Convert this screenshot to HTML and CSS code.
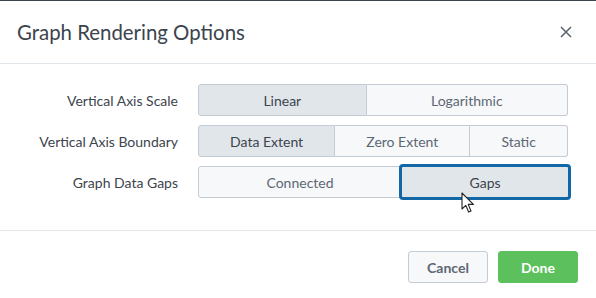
FILE: index.html
```html
<!DOCTYPE html>
<html lang="en">
<head>
    <meta charset="UTF-8">
    <title>Graph Rendering Options</title>
    <link rel="stylesheet" href="styles.css">
</head>
<body>
    <div class="modal">
        <!-- Header -->
        <div class="modal-header">
            <h1>Graph Rendering Options</h1>
            <button class="close" aria-label="Close">
                <svg width="12" height="12" viewBox="0 0 12 12"><path d="M1 1L11 11M11 1L1 11" stroke="#5c6773" stroke-width="1.6" fill="none"/></svg>
            </button>
        </div>

        <!-- Options -->
        <div class="modal-body">
            <div class="field">
                <label>Vertical Axis Scale</label>
                <div class="segmented">
                    <button class="seg selected">Linear</button>
                    <button class="seg">Logarithmic</button>
                </div>
            </div>
            <div class="field">
                <label>Vertical Axis Boundary</label>
                <div class="segmented">
                    <button class="seg selected">Data Extent</button>
                    <button class="seg">Zero Extent</button>
                    <button class="seg">Static</button>
                </div>
            </div>
            <div class="field">
                <label>Graph Data Gaps</label>
                <div class="segmented">
                    <button class="seg">Connected</button>
                    <button class="seg selected focused">Gaps
                        <svg class="cursor" width="14" height="22" viewBox="0 0 14 22"><path d="M1 1L1 17L4.8 13.4L7.6 20L10 19L7.2 12.4L12.4 12.4Z" fill="#fff" stroke="#222" stroke-width="1.1" stroke-linejoin="round"/></svg>
                    </button>
                </div>
            </div>
        </div>

        <!-- Footer -->
        <div class="modal-footer">
            <button class="btn cancel">Cancel</button>
            <button class="btn done">Done</button>
        </div>
    </div>
</body>
</html>
```

FILE: styles.css
```css
/* General styles */
body {
    margin: 0;
    background: #fff;
    font-family: Lato, "Open Sans", sans-serif;
    color: #3c444d;
}
.modal {
    width: 596px;
    height: 298px;
    border-top: 1px solid #3c444d;
    box-sizing: border-box;
}

/* Header */
.modal-header {
    height: 62px;
    display: flex;
    align-items: center;
    justify-content: space-between;
    padding: 0 24px 0 17px;
    border-bottom: 1px solid #e1e6eb;
}
.modal-header h1 {
    margin: 0;
    font-size: 20.4px;
    font-weight: 400;
    color: #3c444d;
}
.close {
    background: none;
    border: none;
    padding: 0;
    display: flex;
}

/* Body */
.modal-body {
    padding: 20px 28px 32px 20px;
    display: flex;
    flex-direction: column;
    gap: 9px;
    border-bottom: 1px solid #e1e6eb;
}
.field {
    display: flex;
    align-items: center;
    gap: 20px;
}
.field label {
    width: 158px;
    text-align: right;
    font-size: 14px;
}
.segmented {
    flex: 1;
    display: flex;
    height: 32px;
}
.seg {
    flex: 1 1 auto;
    position: relative;
    font-family: inherit;
    font-size: 14px;
    color: #5c6773;
    background: #f7f8fa;
    border: 1px solid #c3cbd4;
    border-left-width: 0;
    padding: 0 16px;
    margin: 0;
}
.seg:first-child {
    border-left-width: 1px;
    border-radius: 3px 0 0 3px;
}
.seg:last-child {
    border-radius: 0 3px 3px 0;
}
.seg.selected {
    background: #e1e6eb;
    color: #3c444d;
}
.seg.focused {
    border: 3px solid #1268a6;
    border-radius: 4px;
    margin: -2px -3px -2px -3px;
}
.cursor {
    position: absolute;
    left: 59px;
    top: 25px;
}

/* Footer */
.modal-footer {
    display: flex;
    justify-content: flex-end;
    gap: 10px;
    padding: 20px 18px 0 0;
}
.btn {
    width: 80px;
    height: 32px;
    font-family: inherit;
    font-size: 14px;
    font-weight: 700;
    border-radius: 3px;
}
.cancel {
    background: #f7f8fa;
    border: 1px solid #c3cbd4;
    color: #5c6773;
}
.done {
    background: #5cc05c;
    border: 1px solid #5cc05c;
    color: #fff;
}
```
